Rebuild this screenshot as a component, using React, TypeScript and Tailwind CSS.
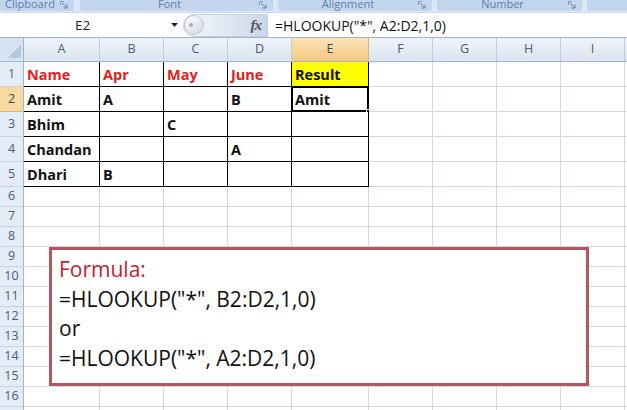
import React from 'react';

type Cell = { t: string; red?: boolean; yellow?: boolean };

const DATA: Record<string, Cell> = {
  A1: { t: 'Name', red: true },
  B1: { t: 'Apr', red: true },
  C1: { t: 'May', red: true },
  D1: { t: 'June', red: true },
  E1: { t: 'Result', yellow: true },
  A2: { t: 'Amit' },
  B2: { t: 'A' },
  D2: { t: 'B' },
  E2: { t: 'Amit' },
  A3: { t: 'Bhim' },
  C3: { t: 'C' },
  A4: { t: 'Chandan' },
  D4: { t: 'A' },
  A5: { t: 'Dhari' },
  B5: { t: 'B' },
};

const COLS = ['A', 'B', 'C', 'D', 'E', 'F', 'G', 'H', 'I', 'J'];
const ROWS = Array.from({ length: 17 }, (_, i) => i + 1);

function Launcher() {
  return (
    <svg width="8" height="8" viewBox="0 0 8 8" className="shrink-0">
      <path d="M0.5 4V0.5H4" fill="none" stroke="#7d98c2" strokeWidth="1" />
      <path d="M2 2L6.5 6.5" fill="none" stroke="#5f7fb0" strokeWidth="1" />
      <path d="M7 3.5V7H3.5" fill="none" stroke="#5f7fb0" strokeWidth="1" />
    </svg>
  );
}

function Group({ cls, label }: { cls: string; label: string }) {
  return (
    <div className={`${cls} h-[11px] shrink-0 bg-[#c3d6ee] rounded-b-[3px] flex items-start overflow-hidden`}>
      <div className="flex-1 -mt-[3px] text-center text-[11px] leading-[14px] text-[#5b7db1] whitespace-nowrap">
        {label}
      </div>
      <div className="w-[14px] flex justify-start pt-[1px]">
        <Launcher />
      </div>
    </div>
  );
}

function Ribbon() {
  return (
    <div className="h-[12px] bg-[#dce7f5] flex items-start">
      <Group cls="w-[74px]" label="Clipboard" />
      <Group cls="w-[193px] ml-[6px]" label="Font" />
      <Group cls="w-[154px] ml-[5px]" label="Alignment" />
      <Group cls="w-[145px] ml-[5px]" label="Number" />
      <div className="w-[60px] ml-[5px] h-[11px] shrink-0 bg-[#c3d6ee] rounded-b-[3px]" />
    </div>
  );
}

function FormulaBar() {
  return (
    <div className="h-[26px] bg-white border-t border-t-[#c9d8ec] border-b border-b-[#9fb4cf] flex items-center">
      <div className="w-[165px] shrink-0 text-center text-[13.5px] text-[#222]">E2</div>
      <div className="w-[18px] shrink-0 flex justify-center">
        <svg width="7" height="4" viewBox="0 0 7 4">
          <path d="M0 0H7L3.5 4Z" fill="#222" />
        </svg>
      </div>
      <div className="w-[85px] h-[23px] shrink-0 rounded-l-full bg-linear-to-r from-[#f5f7fa] via-[#e1e8f2] to-[#c8d6ea] border border-[#c3d0e1] flex items-center justify-between pr-[6px]">
        <div className="w-[20px] h-[20px] rounded-full bg-linear-to-br from-white to-[#d3dae4] border border-[#bcc6d3] flex items-center pl-[4px]">
          <div className="w-[4px] h-[4px] rounded-full bg-[#b9a9a9]" />
        </div>
        <span className="font-['Liberation_Serif',serif] italic font-bold text-[15px] text-[#555] tracking-[-1px]">fx</span>
      </div>
      <div className="pl-[7px] text-[14px] text-[#111] whitespace-nowrap">=HLOOKUP("*", A2:D2,1,0)</div>
    </div>
  );
}

function Sheet() {
  return (
    <div className="w-[689px] grid grid-cols-[24px_76px_64px_64px_64px_77px_64px_64px_64px_64px_64px] grid-rows-[24px_repeat(5,25px)_repeat(12,20px)]">
      <div className="bg-[#d8e2f0] border-r border-r-[#9eb6ce] border-b border-b-[#9eb6ce] flex items-end justify-end pr-[2px] pb-[3px]">
        <svg width="14" height="14" viewBox="0 0 14 14">
          <path d="M14 0V14H0Z" fill="#b7c7dd" />
          <path d="M14 0L0 14" stroke="#e9eff7" strokeWidth="1" />
        </svg>
      </div>
      {COLS.map((c) => (
        <div
          key={c}
          className={`flex items-center justify-center text-[12.5px] border-r border-b border-b-[#9eb6ce] ${
            c === 'E'
              ? 'bg-linear-to-b from-[#fbe3b8] to-[#f6c87c] border-r-[#e2b46a] text-[#3d4b60]'
              : 'bg-linear-to-b from-[#eef3fa] to-[#dbe4f0] border-r-[#c0ccdc] text-[#4b5b75]'
          }`}
        >
          {c}
        </div>
      ))}
      {ROWS.map((r) => (
        <React.Fragment key={r}>
          <div
            className={`flex items-center justify-center text-[12.5px] border-r border-r-[#9eb6ce] border-b ${
              r === 2 ? 'bg-[#f8d9a0] border-b-[#e2b46a] text-[#3d4b60]' : 'bg-[#e4ecf7] border-b-[#c5d2e3] text-[#4b5b75]'
            }`}
          >
            {r}
          </div>
          {COLS.map((c, ci) => {
            const id = `${c}${r}`;
            const cell = DATA[id];
            const inTable = r <= 5 && ci <= 4;
            return (
              <div
                key={id}
                className={`relative flex items-end pl-[3px] pb-[1px] border-r border-b ${
                  inTable ? 'border-black' : 'border-[#d0d7e5]'
                } ${cell?.yellow ? 'bg-[#ffff00]' : 'bg-white'}`}
              >
                {cell && (
                  <span
                    className={`text-[14.5px] font-bold leading-[20px] whitespace-nowrap ${
                      cell.red ? 'text-[#e3211c]' : 'text-[#111]'
                    }`}
                  >
                    {cell.t}
                  </span>
                )}
                {id === 'E2' && (
                  <>
                    <div className="absolute -left-[1px] -top-[1px] right-[-1px] bottom-[-1px] border-2 border-black pointer-events-none" />
                    <div className="absolute right-[-4px] bottom-[-4px] w-[6px] h-[6px] bg-black border border-white" />
                  </>
                )}
              </div>
            );
          })}
        </React.Fragment>
      ))}
    </div>
  );
}

export default function App() {
  return (
    <div className="relative w-[627px] h-[410px] overflow-hidden bg-white font-['Open_Sans',sans-serif]">
      <Ribbon />
      <FormulaBar />
      <Sheet />
      <div className="absolute left-[49px] top-[247px] w-[540px] h-[139px] border-[3px] border-[#b4575c] bg-white pl-[7px] pt-[5px] text-[21px] leading-[29.5px] text-[#111] whitespace-nowrap">
        <div className="text-[#c4232d]">Formula:</div>
        <div>=HLOOKUP("*", B2:D2,1,0)</div>
        <div>or</div>
        <div>=HLOOKUP("*", A2:D2,1,0)</div>
      </div>
    </div>
  );
}
